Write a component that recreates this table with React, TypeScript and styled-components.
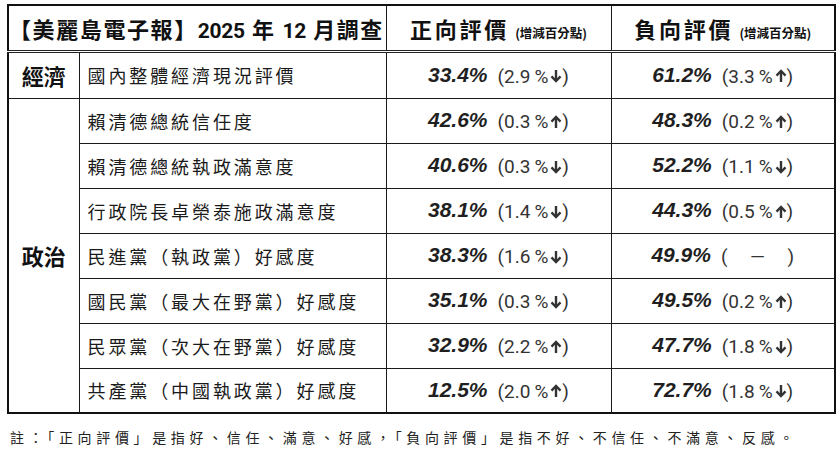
import React from "react";
import styled, { createGlobalStyle } from "styled-components";

const Global = createGlobalStyle`
  html, body { margin: 0; padding: 0; background: #fff; }
  body { font-family: "Noto Sans CJK TC", "Noto Sans", sans-serif; color: #111; }
`;

const Page = styled.div`
  width: 840px;
  height: 450px;
  padding: 4px 6px 0 7px;
  box-sizing: border-box;
  overflow: hidden;
`;

const Table = styled.table`
  width: 827px;
  border-collapse: collapse;
  table-layout: fixed;
  border: 2px solid #111;
`;

const HeadRow = styled.tr`
  height: 46px;
  border-bottom: 3px double #222;
`;

const Row = styled.tr<{ $h?: number }>`
  height: ${(p) => p.$h ?? 45}px;
`;

const Cell = styled.td`
  border: 1.5px solid #1a1a1a;
  padding: 0;
  vertical-align: middle;
`;

const TitleCell = styled(Cell)`
  font-family: "Roboto", "Noto Sans CJK TC", sans-serif;
  font-weight: 700;
  font-size: 22px;
  padding-left: 0;
  white-space: nowrap;
  letter-spacing: 1.6px;
  color: #111;
`;

const Num = styled.span`
  font-family: "Roboto", sans-serif;
  font-size: 21px;
  letter-spacing: -0.3px;
`;

const HeadCell = styled(Cell)`
  text-align: center;
  white-space: nowrap;
  font-weight: 700;
  font-size: 22px;
  letter-spacing: 2.8px;
  color: #111;
`;

const Small = styled.span`
  font-size: 12.5px;
  letter-spacing: 0;
  margin-left: 6px;
  font-weight: 700;
`;

const CatCell = styled(Cell)`
  text-align: center;
  font-weight: 700;
  font-size: 22px;
  color: #111;
`;

const ItemCell = styled(Cell)`
  font-size: 18px;
  font-weight: 400;
  letter-spacing: 2.9px;
  padding-left: 8px;
  white-space: nowrap;
  color: #1a1a1a;
`;

const ValueCell = styled(Cell)`
  text-align: center;
  white-space: nowrap;
`;

const Pct = styled.span`
  font-family: "Liberation Sans", Arial, sans-serif;
  font-weight: 700;
  font-style: italic;
  font-size: 21px;
  color: #1f1f1f;
  margin-right: 10px;
`;

const Delta = styled.span`
  font-family: "Roboto", sans-serif;
  font-size: 19px;
  color: #333;
  display: inline-flex;
  align-items: center;
  vertical-align: -1px;
`;

const PctSign = styled.span`
  margin-left: 4px;
`;

const DashBox = styled.span`
  display: inline-block;
  width: 60px;
  text-align: center;
`;

const Note = styled.div`
  margin-top: 13px;
  margin-left: 3px;
  font-size: 14px;
  letter-spacing: 4.65px;
  color: #222;
  white-space: nowrap;
`;

const Arrow = ({ up }: { up: boolean }) => (
  <svg width="12" height="14" viewBox="0 0 12 14" style={{ marginLeft: 2, transform: up ? "rotate(180deg)" : undefined }}>
    <path d="M6 1 V12" stroke="#333" strokeWidth="2.4" fill="none" />
    <path d="M1.5 7.4 L6 12 L10.5 7.4" stroke="#333" strokeWidth="2.4" fill="none" strokeLinejoin="miter" />
  </svg>
);

type Val = { pct: string; d?: string; up?: boolean };

const Value = ({ v }: { v: Val }) => (
  <ValueCell>
    <Pct>{v.pct}</Pct>
    {v.d ? (
      <Delta>
        ({v.d}
        <PctSign>%</PctSign>
        <Arrow up={!!v.up} />)
      </Delta>
    ) : (
      <Delta>
        (<DashBox>—</DashBox>)
      </Delta>
    )}
  </ValueCell>
);

type RowData = { label: string; pos: Val; neg: Val };

const politics: RowData[] = [
  { label: "賴清德總統信任度", pos: { pct: "42.6%", d: "0.3", up: true }, neg: { pct: "48.3%", d: "0.2", up: true } },
  { label: "賴清德總統執政滿意度", pos: { pct: "40.6%", d: "0.3", up: false }, neg: { pct: "52.2%", d: "1.1", up: false } },
  { label: "行政院長卓榮泰施政滿意度", pos: { pct: "38.1%", d: "1.4", up: false }, neg: { pct: "44.3%", d: "0.5", up: true } },
  { label: "民進黨（執政黨）好感度", pos: { pct: "38.3%", d: "1.6", up: false }, neg: { pct: "49.9%" } },
  { label: "國民黨（最大在野黨）好感度", pos: { pct: "35.1%", d: "0.3", up: false }, neg: { pct: "49.5%", d: "0.2", up: true } },
  { label: "民眾黨（次大在野黨）好感度", pos: { pct: "32.9%", d: "2.2", up: true }, neg: { pct: "47.7%", d: "1.8", up: false } },
  { label: "共產黨（中國執政黨）好感度", pos: { pct: "12.5%", d: "2.0", up: true }, neg: { pct: "72.7%", d: "1.8", up: false } },
];

export default function App() {
  return (
    <Page>
      <Global />
      <Table>
        <colgroup>
          <col style={{ width: 71 }} />
          <col style={{ width: 307 }} />
          <col style={{ width: 225 }} />
          <col style={{ width: 224 }} />
        </colgroup>
        <tbody>
          <HeadRow>
            <TitleCell colSpan={2}>
              【美麗島電子報】<Num>2025</Num> 年 <Num>12</Num> 月調查
            </TitleCell>
            <HeadCell>
              正向評價<Small>(增減百分點)</Small>
            </HeadCell>
            <HeadCell>
              負向評價<Small>(增減百分點)</Small>
            </HeadCell>
          </HeadRow>
          <Row $h={47}>
            <CatCell>經濟</CatCell>
            <ItemCell>國內整體經濟現況評價</ItemCell>
            <Value v={{ pct: "33.4%", d: "2.9", up: false }} />
            <Value v={{ pct: "61.2%", d: "3.3", up: true }} />
          </Row>
          {politics.map((r, i) => (
            <Row key={r.label}>
              {i === 0 && <CatCell rowSpan={politics.length}>政治</CatCell>}
              <ItemCell>{r.label}</ItemCell>
              <Value v={r.pos} />
              <Value v={r.neg} />
            </Row>
          ))}
        </tbody>
      </Table>
      <Note>註：「正向評價」是指好、信任、滿意、好感，「負向評價」是指不好、不信任、不滿意、反感。</Note>
    </Page>
  );
}
